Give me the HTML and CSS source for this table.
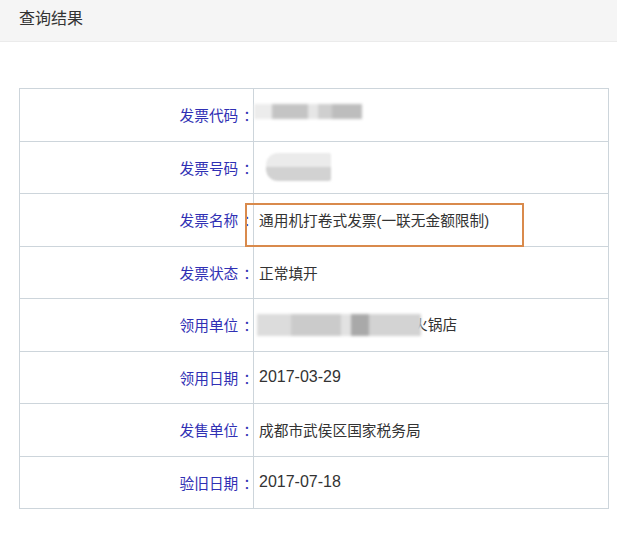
FILE: index.html
```html
<!DOCTYPE html>
<html lang="zh-CN">
<head>
<meta charset="utf-8">
<title>查询结果</title>
<link rel="stylesheet" href="styles.css">
</head>
<body>
<div class="header">查询结果</div>
<div class="content">
  <table class="result">
    <tr>
      <td class="label">发票代码<span class="colon">：</span></td>
      <td class="value"><span class="mask mask-code"><i class="b1"></i><i class="b2"></i><i class="b3"></i><i class="b4"></i><i class="b5"></i></span></td>
    </tr>
    <tr>
      <td class="label">发票号码<span class="colon">：</span></td>
      <td class="value"><span class="mask mask-num"></span></td>
    </tr>
    <tr>
      <td class="label">发票名称<span class="colon">：</span></td>
      <td class="value highlight-cell">通用机打卷式发票(一联无金额限制)<span class="highlight"></span></td>
    </tr>
    <tr>
      <td class="label">发票状态<span class="colon">：</span></td>
      <td class="value">正常填开</td>
    </tr>
    <tr>
      <td class="label">领用单位<span class="colon">：</span></td>
      <td class="value"><span class="mask mask-unit"><i class="u1"></i><i class="u2"></i><i class="u3"></i><i class="u4"></i><i class="u5"></i></span>火锅店</td>
    </tr>
    <tr>
      <td class="label">领用日期<span class="colon">：</span></td>
      <td class="value"><span class="num">2017-03-29</span></td>
    </tr>
    <tr>
      <td class="label">发售单位<span class="colon">：</span></td>
      <td class="value">成都市武侯区国家税务局</td>
    </tr>
    <tr>
      <td class="label">验旧日期<span class="colon">：</span></td>
      <td class="value"><span class="num">2017-07-18</span></td>
    </tr>
  </table>
</div>
</body>
</html>
```

FILE: styles.css
```css
html, body {
  margin: 0;
  padding: 0;
  background: #ffffff;
}
body {
  font-family: "Liberation Sans", "Noto Sans CJK SC", sans-serif;
  font-size: 14.7px;
  color: #333333;
}
.header {
  height: 41px;
  line-height: 37px;
  padding-left: 19px;
  background: #f5f5f5;
  border-bottom: 1px solid #ebebeb;
  color: #333;
  font-size: 16px;
}
.content {
  padding: 46px 8px 0 19px;
}
.result {
  width: 590px;
  border-collapse: collapse;
  border: 1px solid #cdd5db;
}
.result td {
  border: 1px solid #cdd5db;
  height: 51.5px;
  padding: 0;
  vertical-align: middle;
}
.label {
  width: 233px;
  text-align: right;
  color: #3030b4;
  white-space: nowrap;
}
.colon {
  margin-left: 5px;
  letter-spacing: -5px;
}
.value {
  padding-left: 5px !important;
  color: #333;
  white-space: nowrap;
}
.num {
  font-size: 16px;
}
.highlight-cell {
  position: relative;
}
.highlight {
  position: absolute;
  left: -9px;
  top: 9px;
  width: 275px;
  height: 40px;
  border: 2px solid #d98a4c;
}
.mask {
  display: inline-flex;
  vertical-align: middle;
  filter: blur(1.5px);
}
.mask i {
  display: block;
  height: 15px;
}
.mask-code {
  margin-left: -5px;
  margin-top: -8px;
}
.mask-code .b1 { width: 18px; background: #ececec; }
.mask-code .b2 { width: 36px; background: #c4c4c4; }
.mask-code .b3 { width: 10px; background: #e6e6e6; }
.mask-code .b4 { width: 14px; background: #cfcfcf; }
.mask-code .b5 { width: 30px; background: #bdbdbd; }
.mask-num {
  width: 65px;
  height: 28px;
  margin-left: 7px;
  border-radius: 12px 2px 2px 12px;
  background: linear-gradient(#ebebeb 0 48%, #d2d2d2 52% 100%);
  filter: blur(1px);
}
.mask-unit {
  position: relative;
  z-index: 1;
  margin-left: -2px;
  margin-right: -8px;
  margin-top: -2px;
}
.mask-unit i { height: 22px; }
.mask-unit .u1 { width: 34px; background: #dcdcdc; }
.mask-unit .u2 { width: 50px; background: #cbcbcb; }
.mask-unit .u3 { width: 10px; background: #e2e2e2; }
.mask-unit .u4 { width: 18px; background: #a9a9a9; }
.mask-unit .u5 { width: 52px; background: #d3d3d3; }
```
